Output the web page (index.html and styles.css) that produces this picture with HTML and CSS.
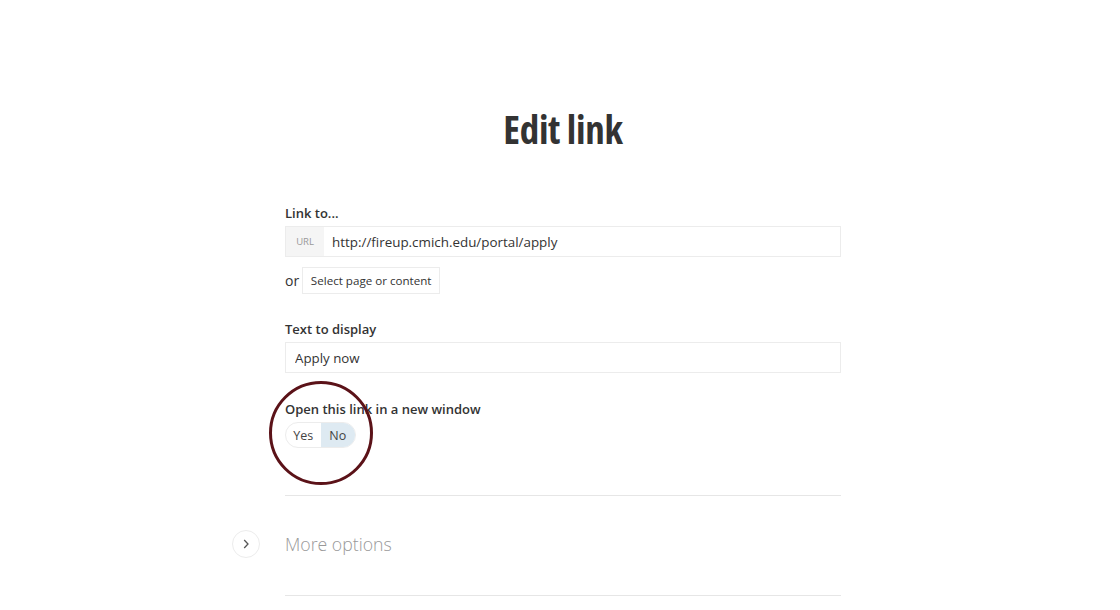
FILE: index.html
```html
<!DOCTYPE html>
<html lang="en">
<head>
    <meta charset="UTF-8">
    <title>Edit link</title>
    <link rel="stylesheet" href="styles.css">
</head>
<body>
    <div class="page">
        <h1 class="title">Edit link</h1>

        <form class="form">
            <!-- Link target -->
            <div class="field field-link">
                <label class="label">Link to...</label>
                <div class="input-group">
                    <span class="prefix">URL</span>
                    <input type="text" class="input" value="http://fireup.cmich.edu/portal/apply">
                </div>
                <div class="chooser">
                    <span class="or">or</span>
                    <button type="button" class="btn">Select page or content</button>
                </div>
            </div>

            <!-- Display text -->
            <div class="field">
                <label class="label">Text to display</label>
                <input type="text" class="input input-full" value="Apply now">
            </div>

            <!-- New window toggle -->
            <div class="field field-toggle">
                <label class="label">Open this link in a new window</label>
                <div class="toggle">
                    <span class="toggle-opt">Yes</span>
                    <span class="toggle-opt active">No</span>
                </div>
                <span class="highlight"></span>
            </div>

            <div class="more">
                <span class="more-btn">
                    <svg width="10" height="12" viewBox="0 0 10 12"><path d="M3.2 2 L7 6 L3.2 10" fill="none" stroke="#555" stroke-width="1.3"/></svg>
                </span>
                <span class="more-text">More options</span>
            </div>
        </form>
    </div>
</body>
</html>
```

FILE: styles.css
```css
body {
    margin: 0;
    background: #fff;
    font-family: "Open Sans", Arial, sans-serif;
    color: #333;
}

.page {
    padding-left: 6px;
}

.title {
    margin: 0;
    padding-top: 101px;
    text-align: center;
    font-family: "Open Sans", sans-serif;
    font-stretch: 75%;
    font-weight: 700;
    font-size: 39px;
    line-height: 55px;
    letter-spacing: -0.3px;
    color: #333;
}

.form {
    width: 556px;
    margin: 47px auto 0;
}

.field {
    margin-bottom: 24px;
}

.field-link {
    margin-bottom: 25px;
}

.label {
    display: block;
    font-size: 13px;
    font-weight: 600;
    line-height: 20px;
    margin-bottom: 3px;
    color: #333;
}

.input-group {
    display: flex;
    height: 31px;
    border: 1px solid #ececec;
    box-sizing: border-box;
}

.prefix {
    width: 38px;
    background: #f5f5f5;
    color: #999;
    font-size: 9.5px;
    display: flex;
    align-items: center;
    justify-content: center;
}

.input {
    flex: 1;
    border: 0;
    outline: 0;
    padding: 0 8px;
    font-family: "Open Sans", sans-serif;
    font-size: 13.4px;
    color: #333;
    background: #fff;
}

.input-full {
    display: block;
    width: 100%;
    height: 31px;
    box-sizing: border-box;
    border: 1px solid #ececec;
    padding: 0 9px;
    font-size: 13.3px;
}

.chooser {
    display: flex;
    align-items: center;
    margin-top: 10px;
}

.or {
    font-size: 14px;
    margin-right: 3px;
}

.btn {
    height: 27px;
    width: 138px;
    padding: 0;
    border: 1px solid #ececec;
    background: #fff;
    font-family: "Open Sans", sans-serif;
    font-size: 11.6px;
    color: #333;
}

.field-toggle {
    position: relative;
    padding-top: 2px;
}

.toggle {
    display: inline-flex;
    border: 1px solid #ececec;
    border-radius: 14px;
    overflow: hidden;
    height: 26px;
    width: 71px;
    box-sizing: border-box;
}

.toggle-opt {
    display: flex;
    align-items: center;
    justify-content: center;
    width: 36px;
    font-size: 12.5px;
    color: #444;
}

.toggle-opt.active {
    background: #deeaf2;
}

/* highlight ring drawn over the toggle */
.highlight {
    position: absolute;
    left: -16px;
    top: -16px;
    width: 104px;
    height: 104px;
    border: 3px solid #5b1218;
    border-radius: 50%;
    box-sizing: border-box;
}

.more {
    display: flex;
    align-items: center;
    border-top: 1px solid #e6e6e6;
    border-bottom: 1px solid #e6e6e6;
    height: 96px;
    padding-bottom: 3px;
    margin-top: 47px;
    position: relative;
}

.more-btn {
    position: absolute;
    left: -53px;
    width: 28px;
    height: 28px;
    border: 1px solid #ececec;
    border-radius: 50%;
    display: flex;
    align-items: center;
    justify-content: center;
    box-sizing: border-box;
}

.more-text {
    font-size: 17.7px;
    font-weight: 300;
    color: #999;
}
```
